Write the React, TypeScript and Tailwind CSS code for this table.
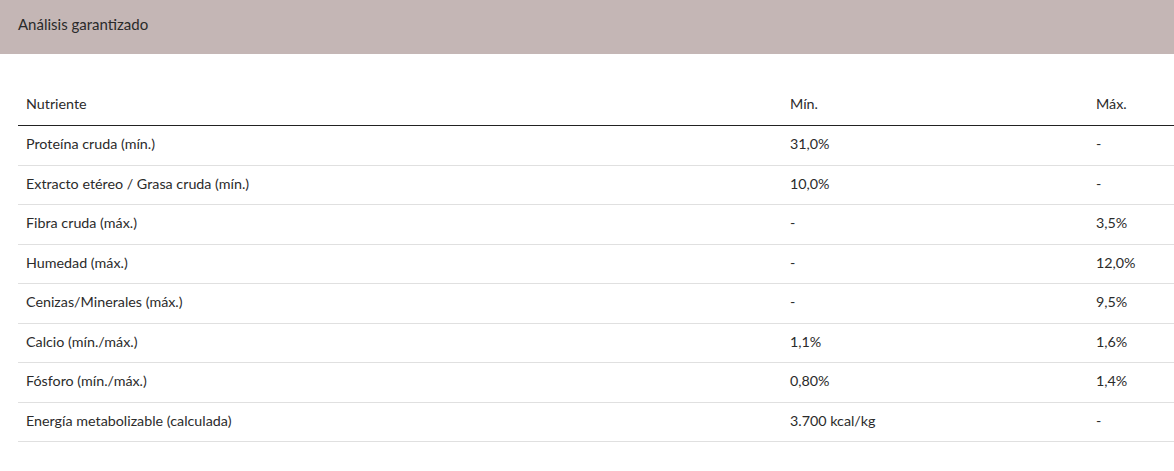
import React from "react";

const rows: [string, string, string][] = [
  ["Proteína cruda (mín.)", "31,0%", "-"],
  ["Extracto etéreo / Grasa cruda (mín.)", "10,0%", "-"],
  ["Fibra cruda (máx.)", "-", "3,5%"],
  ["Humedad (máx.)", "-", "12,0%"],
  ["Cenizas/Minerales (máx.)", "-", "9,5%"],
  ["Calcio (mín./máx.)", "1,1%", "1,6%"],
  ["Fósforo (mín./máx.)", "0,80%", "1,4%"],
  ["Energía metabolizable (calculada)", "3.700 kcal/kg", "-"],
];

export default function App() {
  return (
    <div
      className="w-[1174px] h-[471px] bg-white text-[#2b2b2b] overflow-hidden"
      style={{ fontFamily: "Lato, 'Open Sans', sans-serif" }}
    >
      <div className="h-[54px] bg-[#c4b6b5] flex items-center pl-[18px] pb-[5px] text-[15px] text-[#2a2a2a]">
        Análisis garantizado
      </div>
      <div className="pl-[18px] pt-[30px]">
        <div className="grid grid-cols-[764px_306px_86px] h-[42px] items-center pb-[2px] border-b border-[#222] text-[14.3px]">
          <div className="pl-[8px]">Nutriente</div>
          <div className="pl-[8px]">Mín.</div>
          <div className="pl-[8px]">Máx.</div>
        </div>
        {rows.map((r, i) => (
          <div
            key={i}
            className="grid grid-cols-[764px_306px_86px] h-[39.5px] items-center pb-[3px] border-b border-[#e0e0e0] text-[14.3px]"
          >
            <div className="pl-[8px]">{r[0]}</div>
            <div className="pl-[8px]">{r[1]}</div>
            <div className="pl-[8px]">{r[2]}</div>
          </div>
        ))}
      </div>
    </div>
  );
}
